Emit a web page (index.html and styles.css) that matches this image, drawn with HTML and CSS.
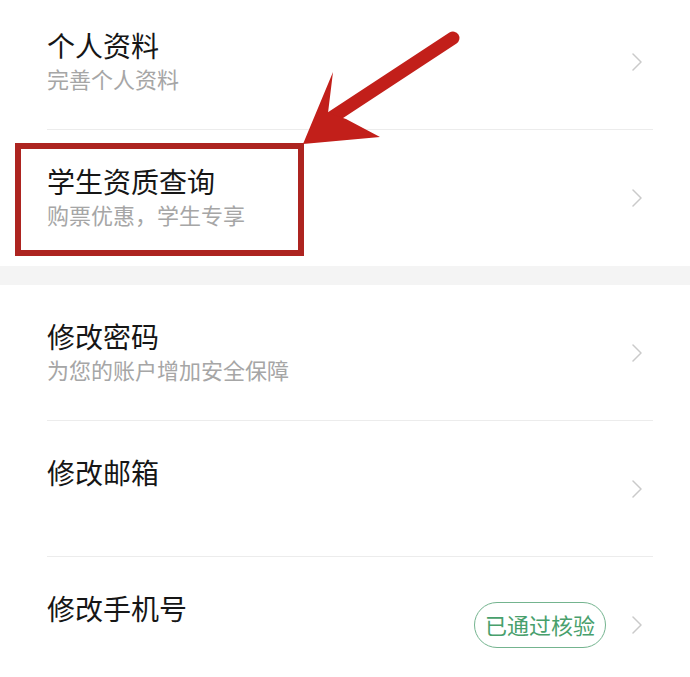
FILE: index.html
```html
<!DOCTYPE html>
<html lang="zh-CN">
<head>
<meta charset="utf-8">
<title>账户设置</title>
<link rel="stylesheet" href="styles.css">
</head>
<body>
<div class="page">
  <section class="group group-first">
    <div class="item">
      <div class="text">
        <div class="title">个人资料</div>
        <div class="sub">完善个人资料</div>
      </div>
      <svg class="chev" viewBox="0 0 10 18" width="10" height="18"><polyline points="1,1 9,9 1,17" /></svg>
    </div>
    <div class="item">
      <div class="text">
        <div class="title">学生资质查询</div>
        <div class="sub">购票优惠，学生专享</div>
      </div>
      <svg class="chev" viewBox="0 0 10 18" width="10" height="18"><polyline points="1,1 9,9 1,17" /></svg>
    </div>
  </section>
  <div class="band"></div>
  <section class="group">
    <div class="item">
      <div class="text">
        <div class="title">修改密码</div>
        <div class="sub">为您的账户增加安全保障</div>
      </div>
      <svg class="chev" viewBox="0 0 10 18" width="10" height="18"><polyline points="1,1 9,9 1,17" /></svg>
    </div>
    <div class="item">
      <div class="text">
        <div class="title">修改邮箱</div>
        <div class="sub"></div>
      </div>
      <svg class="chev" viewBox="0 0 10 18" width="10" height="18"><polyline points="1,1 9,9 1,17" /></svg>
    </div>
    <div class="item">
      <div class="text">
        <div class="title">修改手机号</div>
        <div class="sub"></div>
      </div>
      <span class="badge">已通过核验</span>
      <svg class="chev" viewBox="0 0 10 18" width="10" height="18"><polyline points="1,1 9,9 1,17" /></svg>
    </div>
  </section>
  <svg class="overlay" viewBox="0 0 690 677" width="690" height="677">
    <rect class="frame" x="18" y="146" width="283" height="107" />
    <line class="shaft" x1="322" y1="124" x2="453" y2="38" />
    <polygon class="head" points="303,144 333,72 328,113 346,119 380,137" />
  </svg>
</div>
</body>
</html>
```

FILE: styles.css
```css
html, body {
  margin: 0;
  padding: 0;
  background: #ffffff;
}
body {
  width: 690px;
  height: 677px;
  overflow: hidden;
  font-family: "Noto Sans CJK SC", "Noto Sans", sans-serif;
}
.page {
  position: relative;
  width: 690px;
  height: 677px;
  overflow: hidden;
}
.group-first {
  margin-top: -6px;
}
.item {
  display: flex;
  align-items: center;
  height: 136px;
  box-sizing: border-box;
  margin: 0 37px 0 47px;
  border-bottom: 1px solid #ececec;
}
.group .item:last-child {
  border-bottom: none;
}
.text {
  flex: 1;
  align-self: flex-start;
  padding-top: 34px;
}
.title {
  font-size: 28px;
  line-height: 34px;
  color: #161616;
}
.sub {
  font-size: 22px;
  line-height: 32px;
  height: 32px;
  color: #a6a6a6;
}
.band {
  height: 19px;
  background: #f4f4f4;
}
.chev {
  flex: none;
  margin-right: 11px;
  fill: none;
  stroke: #cacaca;
  stroke-width: 1.5;
  stroke-linecap: round;
  stroke-linejoin: round;
}
.badge {
  flex: none;
  margin-right: 26px;
  height: 46px;
  box-sizing: border-box;
  padding: 0 10px;
  border: 1.5px solid #74b48f;
  border-radius: 23px;
  font-size: 22px;
  line-height: 42px;
  color: #48a06c;
}
.overlay {
  position: absolute;
  left: 0;
  top: 0;
  pointer-events: none;
}
.frame {
  fill: none;
  stroke: #ad2420;
  stroke-width: 6;
}
.shaft {
  stroke: #c21f1a;
  stroke-width: 13;
  stroke-linecap: round;
}
.head {
  fill: #c21f1a;
}
```
